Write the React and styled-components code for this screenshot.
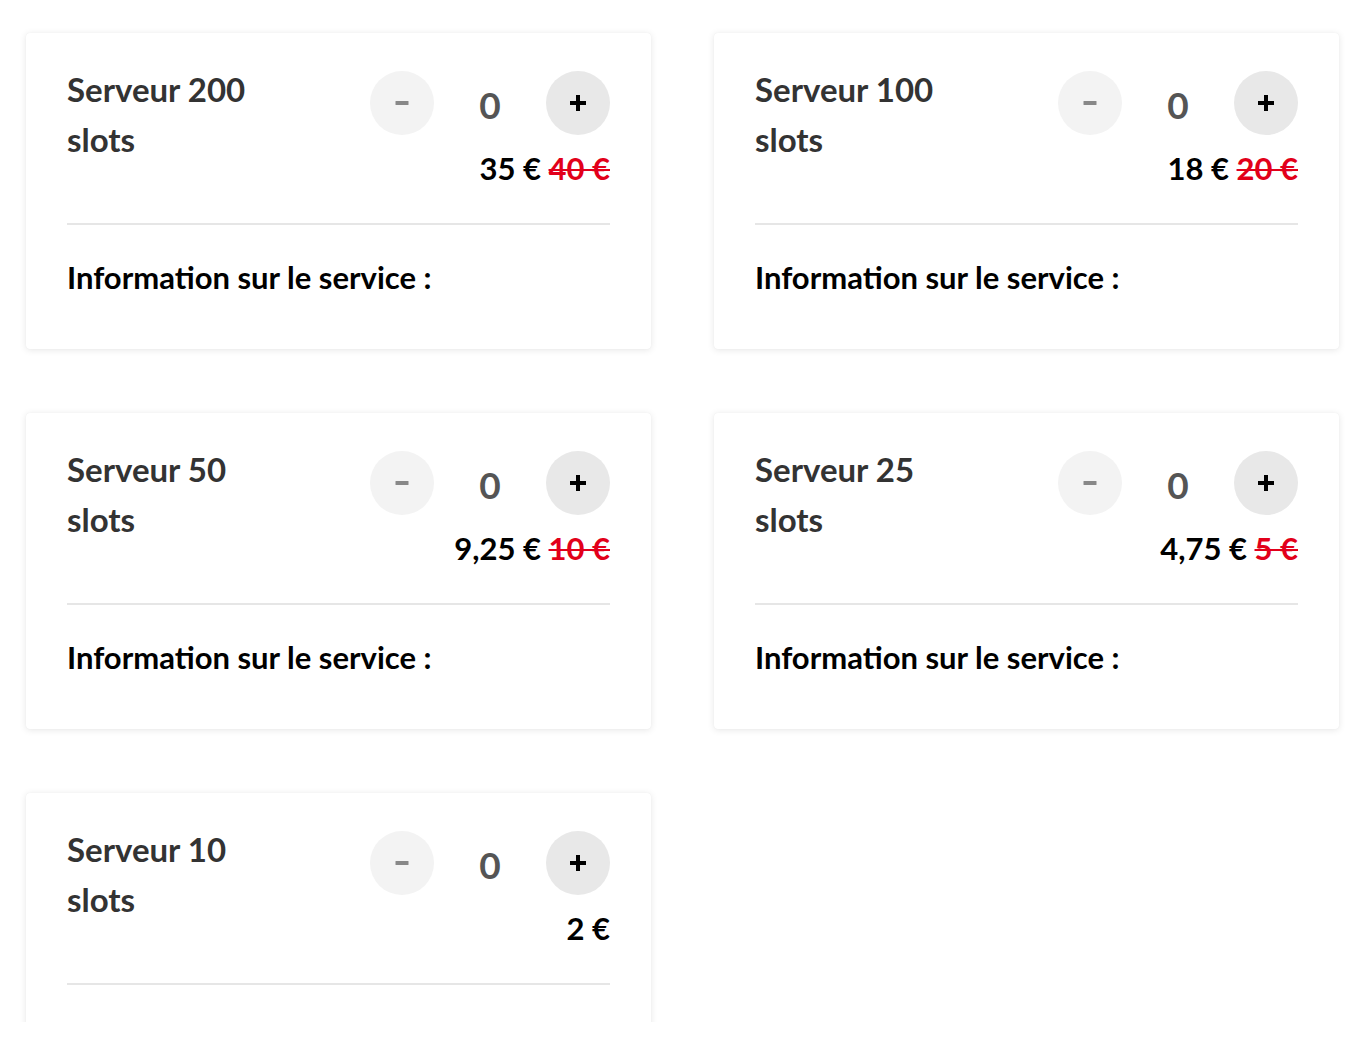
import React, { useState } from "react";
import styled, { createGlobalStyle } from "styled-components";

const GlobalStyle = createGlobalStyle`
  body {
    margin: 0;
    background: #fff;
    font-family: "Source Sans Pro", Lato, "Noto Sans", sans-serif;
  }
`;

// Styled Components =======================================================================================

const Page = styled.div`
  height: 1022px;
  overflow: hidden;
`;

const Grid = styled.div`
  display: grid;
  grid-template-columns: 625px 625px;
  column-gap: 63px;
  row-gap: 64px;
  padding: 33px 0 0 26px;
`;

const Card = styled.div`
  background: #fff;
  border-radius: 4px;
  box-shadow: 0 1px 7px rgba(0, 0, 0, 0.1), 0 0 1px rgba(0, 0, 0, 0.07);
  padding: 38px 41px 54px;
`;

const Top = styled.div`
  display: flex;
  justify-content: space-between;
  align-items: flex-start;
`;

const Title = styled.h3`
  margin: -7px 0 0;
  width: 212px;
  font-size: 33px;
  line-height: 50px;
  font-weight: 700;
  color: #333;
`;

const Side = styled.div`
  display: flex;
  flex-direction: column;
  align-items: flex-end;
`;

const Controls = styled.div`
  display: flex;
  align-items: center;
`;

const RoundButton = styled.button`
  width: 64px;
  height: 64px;
  border: none;
  border-radius: 50%;
  padding: 0;
  display: flex;
  align-items: center;
  justify-content: center;
  background: ${(p) => (p.$plus ? "#e8e8e8" : "#f3f3f3")};
  color: ${(p) => (p.$plus ? "#000" : "#888")};
  cursor: pointer;
`;

const Count = styled.span`
  width: 112px;
  text-align: center;
  font-size: 37px;
  font-weight: 700;
  color: #555;
  padding-top: 2px;
`;

const Price = styled.div`
  margin-top: 16px;
  font-size: 31px;
  line-height: 34px;
  font-weight: 700;
  color: #000;
  white-space: nowrap;
`;

const OldPrice = styled.s`
  color: #e2001a;
  text-decoration-thickness: 2px;
`;

const Divider = styled.hr`
  margin: 38px 0 0;
  border: none;
  height: 2px;
  background: #e6e6e6;
`;

const Info = styled.p`
  margin: 34px 0 0;
  font-size: 31px;
  line-height: 36px;
  font-weight: 700;
  color: #000;
`;

// ==========================================================================================================

function MinusIcon() {
  return (
    <svg width="14" height="6" viewBox="0 0 14 6">
      <rect x="0.5" y="1" width="13" height="4" rx="0.5" fill="currentColor" />
    </svg>
  );
}

function PlusIcon() {
  return (
    <svg width="16" height="16" viewBox="0 0 16 16">
      <rect x="0" y="6" width="16" height="4" fill="currentColor" />
      <rect x="6" y="0" width="4" height="16" fill="currentColor" />
    </svg>
  );
}

const offers = [
  { name: "Serveur 200 slots", price: "35 €", old: "40 €" },
  { name: "Serveur 100 slots", price: "18 €", old: "20 €" },
  { name: "Serveur 50 slots", price: "9,25 €", old: "10 €" },
  { name: "Serveur 25 slots", price: "4,75 €", old: "5 €" },
  { name: "Serveur 10 slots", price: "2 €" },
];

function Offer({ offer }) {
  const [qty, setQty] = useState(0);
  return (
    <Card>
      <Top>
        <Title>{offer.name}</Title>
        <Side>
          <Controls>
            <RoundButton onClick={() => setQty(Math.max(0, qty - 1))}>
              <MinusIcon />
            </RoundButton>
            <Count>{qty}</Count>
            <RoundButton $plus onClick={() => setQty(qty + 1)}>
              <PlusIcon />
            </RoundButton>
          </Controls>
          <Price>
            {offer.price}
            {offer.old && <> <OldPrice>{offer.old}</OldPrice></>}
          </Price>
        </Side>
      </Top>
      <Divider />
      <Info>Information sur le service :</Info>
    </Card>
  );
}

export default function App() {
  return (
    <Page>
      <GlobalStyle />
      <Grid>
        {offers.map((o, i) => (
          <Offer key={i} offer={o} />
        ))}
      </Grid>
    </Page>
  );
}
